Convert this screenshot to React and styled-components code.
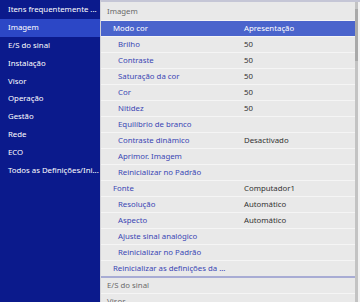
import React from 'react';
import styled, { createGlobalStyle } from 'styled-components';

const GlobalStyle = createGlobalStyle`
  html, body { margin: 0; padding: 0; }
  body {
    width: 360px;
    height: 302px;
    overflow: hidden;
    font-family: "Noto Sans", "Open Sans", sans-serif;
    background: #ffffff;
  }
`;

const Screen = styled.div`
  display: flex;
  width: 360px;
  height: 302px;
  overflow: hidden;
`;

const Sidebar = styled.nav`
  width: 100px;
  flex-shrink: 0;
  background: #0b1a8c;
  padding-top: 1px;
  display: flex;
  flex-direction: column;
`;

const SideItem = styled.div`
  height: 17.9px;
  line-height: 17.9px;
  padding-left: 8px;
  font-size: 7.8px;
  color: #ffffff;
  white-space: nowrap;
  background: ${({ active }) => (active ? '#2c47c6' : 'transparent')};
`;

const Panel = styled.div`
  flex: 1;
  display: flex;
  background: #e9e9e9;
  border-top: 2px solid #c5c6d6;
  border-left: 1px solid #d2d2d8;
`;

const List = styled.div`
  flex: 1;
  display: flex;
  flex-direction: column;
`;

const Header = styled.div`
  height: 18px;
  line-height: 18px;
  padding-left: 6px;
  font-size: 7.8px;
  color: #6a6a6a;
  border-bottom: 1px solid #f4f4f4;
`;

const Row = styled.div`
  display: grid;
  grid-template-columns: 143px 1fr;
  height: 15px;
  line-height: 15px;
  font-size: 7.8px;
  border-bottom: ${({ strong }) => (strong ? '2px solid #a8acd4' : '1px solid #f5f5f5')};
  background: ${({ active }) => (active ? '#4a64cc' : 'transparent')};
  white-space: nowrap;
`;

const Label = styled.span`
  grid-column: ${({ wide }) => (wide ? '1 / 3' : 'auto')};
  padding-left: ${({ level }) => (level === 2 ? 17 : level === 0 ? 6 : 12)}px;
  color: ${({ active, muted }) => (active ? '#ffffff' : muted ? '#6a6a6a' : '#3a46b4')};
`;

const Value = styled.span`
  color: ${({ active }) => (active ? '#ffffff' : '#333333')};
`;

const Scroll = styled.div`
  width: 3px;
  background: #c3c3c3;
  border-right: 2px solid #f2f2f2;
  display: flex;
  flex-direction: column;
  padding-top: 7px;
`;

const Thumb = styled.div`
  height: 52px;
  background: #a9a9a9;
`;

const sideItems = [
  'Itens frequentemente ...',
  'Imagem',
  'E/S do sinal',
  'Instalação',
  'Visor',
  'Operação',
  'Gestão',
  'Rede',
  'ECO',
  'Todos as Definições/Ini...',
];

const rows = [
  { label: 'Modo cor', value: 'Apresentação', level: 1, active: true },
  { label: 'Brilho', value: '50', level: 2 },
  { label: 'Contraste', value: '50', level: 2 },
  { label: 'Saturação da cor', value: '50', level: 2 },
  { label: 'Cor', value: '50', level: 2 },
  { label: 'Nitidez', value: '50', level: 2 },
  { label: 'Equilíbrio de branco', level: 2 },
  { label: 'Contraste dinâmico', value: 'Desactivado', level: 2 },
  { label: 'Aprimor. Imagem', level: 2 },
  { label: 'Reinicializar no Padrão', level: 2 },
  { label: 'Fonte', value: 'Computador1', level: 1 },
  { label: 'Resolução', value: 'Automático', level: 2 },
  { label: 'Aspecto', value: 'Automático', level: 2 },
  { label: 'Ajuste sinal analógico', level: 2 },
  { label: 'Reinicializar no Padrão', level: 2 },
  { label: 'Reinicializar as definições da ...', level: 1, strong: true, wide: true },
  { label: 'E/S do sinal', level: 0, muted: true },
  { label: 'Visor', level: 0, muted: true },
];

export default function App() {
  return (
    <Screen>
      <GlobalStyle />
      <Sidebar>
        {sideItems.map((item, i) => (
          <SideItem key={i} active={i === 1}>{item}</SideItem>
        ))}
      </Sidebar>
      <Panel>
        <List>
          <Header>Imagem</Header>
          {rows.map((r, i) => (
            <Row key={i} active={r.active} strong={r.strong}>
              <Label level={r.level} active={r.active} muted={r.muted} wide={r.wide}>
                {r.label}
              </Label>
              {!r.wide && <Value active={r.active}>{r.value}</Value>}
            </Row>
          ))}
        </List>
        <Scroll>
          <Thumb />
        </Scroll>
      </Panel>
    </Screen>
  );
}
